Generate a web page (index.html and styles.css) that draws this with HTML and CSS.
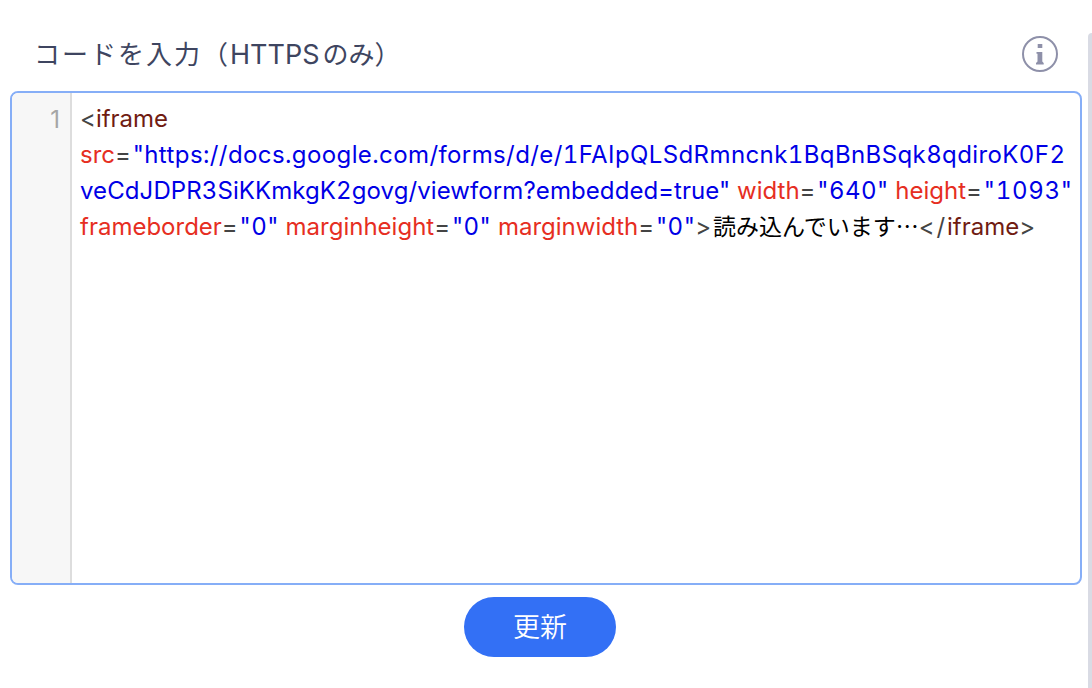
FILE: index.html
```html
<!DOCTYPE html>
<html lang="ja">
<head>
  <meta charset="UTF-8" />
  <title>コードを入力</title>
  <link rel="stylesheet" href="styles.css">
</head>
<body>
  <div class="scrollbar"></div>
  <div class="panel">
    <div class="panel-head">
      <h2 class="panel-title">コードを入力（<span class="latin">HTTPS</span><span class="tail">のみ）</span></h2>
      <svg class="info-icon" width="36" height="36" viewBox="0 0 36 36">
        <circle cx="18" cy="18" r="17" fill="none" stroke="#8e90a9" stroke-width="2" />
        <rect x="15.700" y="8" width="4.600" height="4" fill="#8e90a9" />
        <path d="M14.500 16h5.800v9.500l1.400 1.500v1.500h-7.700v-1.500l1.500-1.500v-7.700h-1z" fill="#8e90a9" />
      </svg>
    </div>
    <div class="editor">
      <div class="gutter">1</div>
      <pre class="code"><span class="punct tight">&lt;</span><span class="tag">iframe</span>
<span class="attr">src</span><span class="punct">=</span><span class="val wide">"https://docs.google.com/forms/d/e/1FAIpQLSdRmncnk1BqBnBSqk8qdiroK0F2</span>
<span class="val">veCdJDPR3SiKKmkgK2govg/viewform?embedded=true"</span> <span class="attr">width</span><span class="punct">=</span><span class="val num">"640"</span> <span class="attr">height</span><span class="punct">=</span><span class="val num long">"1093"</span>
<span class="attr">frameborder</span><span class="punct">=</span><span class="val num">"0"</span> <span class="attr">marginheight</span><span class="punct">=</span><span class="val num">"0"</span> <span class="attr">marginwidth</span><span class="punct">=</span><span class="val num">"0"</span><span class="punct">&gt;</span><span class="cjk">読み込んでいます…</span><span class="punct">&lt;/</span><span class="tag">iframe</span><span class="punct tight">&gt;</span></pre>
    </div>
    <div class="actions">
      <button class="update-btn">更新</button>
    </div>
  </div>
</body>
</html>
```

FILE: styles.css
```css
html, body {
  height: 100%;
}
body {
  margin: 0;
  overflow: hidden;
  background: #fff;
  font-family: "Inter", "Noto Sans CJK JP", sans-serif;
}
.scrollbar {
  position: fixed;
  top: 33px;
  right: 0;
  bottom: 0;
  width: 4px;
  background: #d9dbe4;
  border-radius: 4px 0 0 0;
}
.panel {
  padding: 32px 10px 0;
}
.panel-head {
  display: flex;
  justify-content: space-between;
  align-items: center;
  height: 44px;
  padding: 0 24px;
  margin-bottom: 15px;
  box-sizing: border-box;
}
.panel-title {
  margin: -4px 0 0;
  font-family: "Noto Sans CJK JP", sans-serif;
  font-size: 26px;
  font-weight: 400;
  letter-spacing: 2px;
  color: #3e4560;
}
.panel-title .latin {
  font-family: "Inter", sans-serif;
  font-size: 27px;
  font-weight: 400;
  letter-spacing: 0;
  margin-right: 3px;
}
.panel-title .tail {
  letter-spacing: 0;
}
.info-icon {
  flex: none;
}
.editor {
  display: flex;
  height: 494px;
  box-sizing: border-box;
  border: 2px solid #86aef7;
  border-radius: 8px;
  overflow: hidden;
}
.gutter {
  width: 60px;
  flex: none;
  box-sizing: border-box;
  padding: 9px 10px 0 0;
  background: #f7f7f7;
  border-right: 2px solid #dddddd;
  text-align: right;
  font-size: 24px;
  line-height: 36px;
  color: #a5a5a5;
}
.code {
  margin: 0;
  padding: 8px 0 0 8px;
  font-family: inherit;
  font-size: 24px;
  line-height: 36px;
  color: #000;
}
.cjk {
  font-family: "Noto Sans CJK JP", sans-serif;
  font-size: 23px;
  line-height: 1;
}
.punct {
  color: #444;
  letter-spacing: 1.800px;
}
.punct.tight {
  letter-spacing: 0;
}
.tag { color: #701c12; }
.attr { color: #e62e22; }
.val {
  color: #0000e6;
  font-feature-settings: "tnum";
  letter-spacing: 0.090px;
}
.val.wide { letter-spacing: 0.400px; }
.val.num { letter-spacing: 0.450px; }
.val.num.long { letter-spacing: 0.700px; }
.actions {
  display: flex;
  justify-content: center;
  padding: 12px 12px 0 0;
}
.update-btn {
  width: 152px;
  height: 60px;
  padding: 0 0 3px;
  border: none;
  border-radius: 30px;
  background: #3370f5;
  color: #fff;
  font-family: "Noto Sans CJK JP", sans-serif;
  font-weight: 350;
  font-size: 27px;
}
```
